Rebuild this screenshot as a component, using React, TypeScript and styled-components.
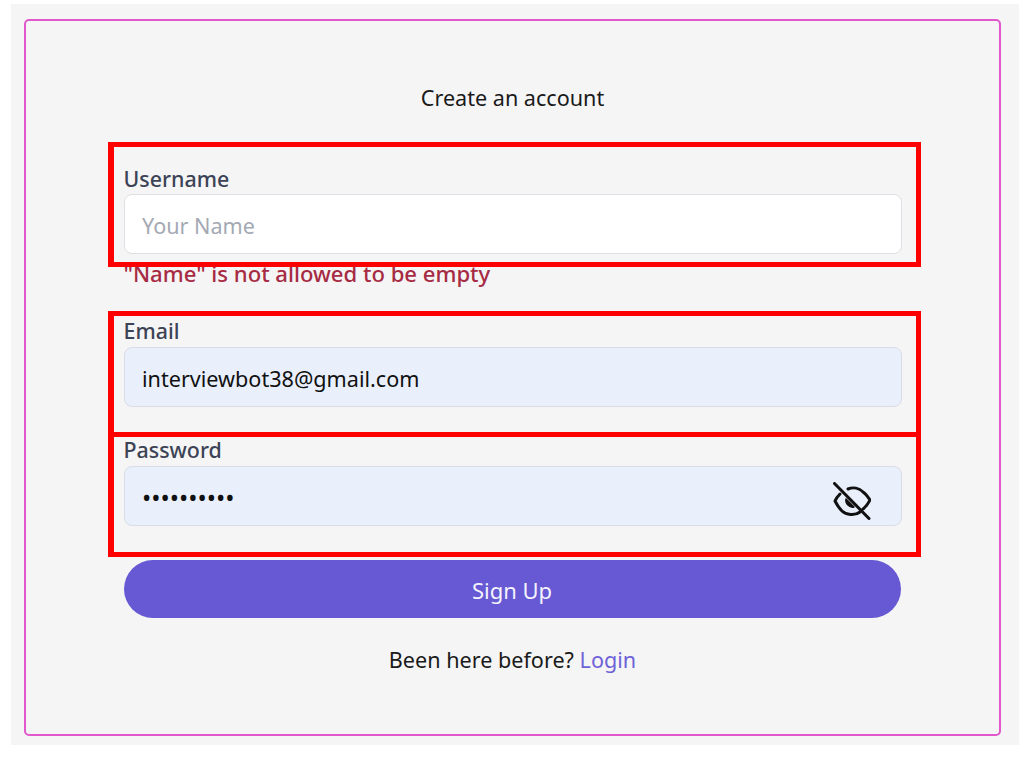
import React from 'react'
import styled, { createGlobalStyle } from 'styled-components'

const GlobalStyle = createGlobalStyle`
  html, body {
    margin: 0;
    background: #fff;
    font-family: "Noto Sans", "Open Sans", sans-serif;
  }
`
const Page = styled.div`
  padding: 4px 5px 18px 11px;
`
const Panel = styled.div`
  background-color: #f5f5f5;
  padding: 15px 18px 9px 13px;
`
const Card = styled.div`
  box-sizing: border-box;
  height: 717px;
  border: 2.5px solid #e058cb;
  border-radius: 5px;
  padding: 61.5px 78.5px 0 81.5px;
`
const Title = styled.div`
  font-size: 21.6px;
  line-height: 30px;
  text-align: center;
  color: #1a1a1a;
  margin-bottom: 29px;
  padding-right: 3px;
`
const Highlight = styled.div<{ $top: number; $bottom: number; $overlap?: boolean }>`
  position: relative;
  border-style: solid;
  border-color: #ff0000;
  border-width: 5px 5px 5px 6px;
  padding: ${(p) => p.$top}px 14px ${(p) => p.$bottom}px 10px;
  margin-top: ${(p) => (p.$overlap ? -5 : 0)}px;
`
const Label = styled.label<{ $gap: number }>`
  display: block;
  font-size: 21.4px;
  line-height: 24px;
  font-weight: 500;
  color: #3c4356;
  margin-bottom: ${(p) => p.$gap}px;
`
const InputWrap = styled.div`
  position: relative;
`
const Input = styled.input<{ $filled?: boolean; $secret?: boolean }>`
  display: block;
  box-sizing: border-box;
  width: 100%;
  height: 60px;
  padding: 3px 17.5px 0;
  border: 1.5px solid ${(p) => (p.$filled ? '#d9dbe6' : '#dfe0e6')};
  border-radius: 8px;
  outline: none;
  background-color: ${(p) => (p.$filled ? '#e9f0fc' : '#fff')};
  font-family: inherit;
  font-size: ${(p) => (p.$secret ? 24.6 : 21.6)}px;
  color: #111;
  &::placeholder {
    color: #a4a9b3;
    opacity: 1;
  }
`
const ErrorText = styled.div`
  margin: -6px 0 26px 16px;
  font-size: 22.1px;
  line-height: 24px;
  font-weight: 500;
  color: #a62b43;
`
const EyeIcon = styled.svg`
  position: absolute;
  top: 16px;
  right: 31px;
  width: 38px;
  height: 38px;
`
const SubmitButton = styled.button`
  display: block;
  width: 777px;
  height: 58px;
  margin: 3px 0 0 16px;
  padding: 2px 0 0;
  border: none;
  border-radius: 29px;
  background-color: #6659d3;
  color: #f4f2fc;
  font-family: inherit;
  font-size: 22px;
`
const Footer = styled.div`
  margin-top: 27px;
  padding-right: 3px;
  font-size: 21.6px;
  line-height: 30px;
  text-align: center;
  color: #1a1a1a;
`
const LoginLink = styled.a`
  color: #6f62d8;
  text-decoration: none;
`

const App: React.FC = () => {
  return (
    <Page>
      <GlobalStyle />
      <Panel>
        <Card>
          <Title>Create an account</Title>
          <Highlight $top={20} $bottom={8}>
            <Label $gap={3}>Username</Label>
            <Input placeholder="Your Name" readOnly />
          </Highlight>
          <ErrorText>"Name" is not allowed to be empty</ErrorText>
          <Highlight $top={3} $bottom={25}>
            <Label $gap={4}>Email</Label>
            <Input $filled value="interviewbot38@gmail.com" readOnly />
          </Highlight>
          <Highlight $top={1} $bottom={26} $overlap>
            <Label $gap={4}>Password</Label>
            <InputWrap>
              <Input $filled $secret type="password" value="abcdefghij" readOnly />
              <EyeIcon viewBox="0 0 38 38" fill="none" stroke="#111" strokeWidth="3" strokeLinecap="round" strokeLinejoin="round">
                <path d="M1.500 1.500 L36 36.500" />
                <path d="M7 12 C5 14 3 16 2 19 C4 23 6 26 9 29 C13 33 22 34 27 30" />
                <path d="M15 7 C20 5 26 6 30 10 C33 12 35 15 37 18 C35 22 33 25 30 27" />
                <path d="M13 17 C12 22 17 26 21 25 Z" fill="#111" strokeWidth="1.500" />
              </EyeIcon>
            </InputWrap>
          </Highlight>
          <SubmitButton>Sign Up</SubmitButton>
          <Footer>
            Been here before? <LoginLink href="#">Login</LoginLink>
          </Footer>
        </Card>
      </Panel>
    </Page>
  )
}

export default App
